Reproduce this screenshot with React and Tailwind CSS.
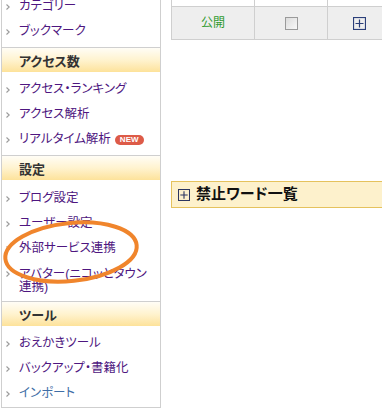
import React from 'react';

const jp = "font-['Liberation_Sans','Noto_Sans_CJK_JP',sans-serif] [font-feature-settings:'palt']";

const Arrow = () => (
    <svg width="4" height="6" viewBox="0 0 4 6" className="absolute left-[4px] top-[11px]">
        <path d="M0.5 0.5L3.2 3L0.5 5.5" fill="none" stroke="#9a9a9a" strokeWidth="1.1" />
    </svg>
);

const Item = ({ children, blue, badge }) => (
    <li className={`relative pl-[17px] pr-2 pt-[6px] pb-[4px] leading-[15px] text-[12.5px] ${blue ? 'text-[#3f6ea6]' : 'text-[#4e1680]'}`}>
        <Arrow />
        {children}
        {badge && (
            <span className="ml-[4px] inline-block align-[1px] rounded-full bg-[#dd5b48] px-[5px] text-[8px] leading-[10px] font-bold text-white font-['Liberation_Sans',sans-serif]">
                NEW
            </span>
        )}
    </li>
);

const Heading = ({ children }) => (
    <div className="h-[25px] border-t border-[#cfcfcf] bg-gradient-to-b from-[#fffdf6] via-[#fff3cf] to-[#fde29a] pl-[17px] pt-[1px] text-[13px] font-bold leading-[25px] text-[#333]">
        {children}
    </div>
);

const PlusBox = ({ color = '#2b3f7a', size = 13 }) => (
    <svg width={size} height={size} viewBox="0 0 13 13">
        <rect x="0.5" y="0.5" width="12" height="12" fill="none" stroke={color} strokeWidth="1.2" />
        <path d="M6.5 2.5V10.5M2.5 6.5H10.5" stroke={color} strokeWidth="1.2" />
    </svg>
);

export default function App() {
    return (
        <div className={`relative h-[415px] w-[382px] overflow-hidden bg-white ${jp}`}>
            <div className="flex items-start">
                {/* Sidebar */}
                <div className="ml-[1px] mt-[-11px] w-[160px] shrink-0 border-x border-b border-[#cfcfcf]">
                    <ul className="pt-[4px] pb-[4px]">
                        <Item>カテゴリー</Item>
                        <Item>ブックマーク</Item>
                    </ul>
                    <Heading>アクセス数</Heading>
                    <ul className="pt-[4px] pb-[4px]">
                        <Item>アクセス・ランキング</Item>
                        <Item>アクセス解析</Item>
                        <Item badge>リアルタイム解析</Item>
                    </ul>
                    <Heading>設定</Heading>
                    <ul className="pt-[5px] pb-[3px]">
                        <Item>ブログ設定</Item>
                        <Item>ユーザー設定</Item>
                        <Item>外部サービス連携</Item>
                        <li className="relative pl-[17px] pr-1 pt-[8px] pb-[4px] leading-[13px] text-[12.5px] text-[#4e1680]">
                            <Arrow />
                            アバター(ニコッとタウン
                            <br />
                            連携)
                        </li>
                    </ul>
                    <Heading>ツール</Heading>
                    <ul className="pt-[4px] pb-[2px]">
                        <Item>おえかきツール</Item>
                        <Item>バックアップ・書籍化</Item>
                        <Item blue>インポート</Item>
                    </ul>
                </div>

                {/* Main */}
                <div className="ml-[10px] flex-1 min-w-0">
                    <div className="w-[220px]">
                        <div className="grid h-[6px] grid-cols-[83px_73px_64px] border-l border-[#cfcfcf]">
                            <div className="border-r border-[#cfcfcf]" />
                            <div className="border-r border-[#cfcfcf]" />
                            <div className="border-r border-[#cfcfcf]" />
                        </div>
                        <div className="grid h-[34px] grid-cols-[83px_73px_64px] border border-[#cfcfcf] bg-[#eeeeee]">
                            <div className="flex items-center justify-center border-r border-[#cfcfcf] text-[12px] text-[#2e9a2e]">公開</div>
                            <div className="flex items-center justify-center border-r border-[#cfcfcf]">
                                <span className="block h-[13px] w-[13px] border border-[#9a9a9a] bg-gradient-to-br from-[#dcdcdc] to-[#f8f8f8]" />
                            </div>
                            <div className="flex items-center justify-center border-r border-[#cfcfcf] pr-[1px]">
                                <PlusBox />
                            </div>
                        </div>
                    </div>

                    <div className="mt-[141px] flex h-[27px] w-[230px] items-center gap-[6px] border border-[#e5c25d] bg-[#fdf1cc] pl-[6px]">
                        <PlusBox color="#2b3560" size={12} />
                        <span className="text-[15px] font-bold text-[#111]">禁止ワード一覧</span>
                    </div>
                </div>
            </div>

            {/* annotation */}
            <svg className="pointer-events-none absolute left-0 top-0" width="382" height="415">
                <ellipse cx="71" cy="252" rx="66" ry="29" transform="rotate(-6 71 252)" fill="none" stroke="#f0852c" strokeWidth="4" />
            </svg>
        </div>
    );
}
